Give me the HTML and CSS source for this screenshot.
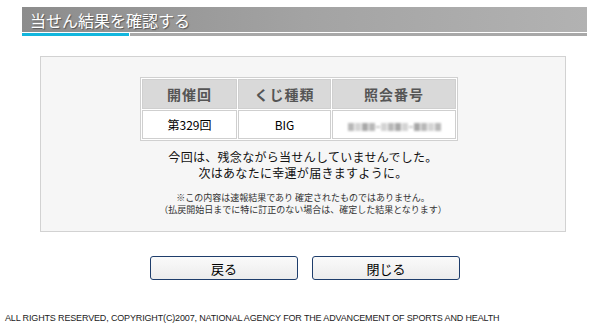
FILE: index.html
```html
<!DOCTYPE html>
<html lang="ja">
<head>
    <meta charset="UTF-8">
    <title>当せん結果を確認する</title>
    <link rel="stylesheet" href="styles.css">
</head>
<body>

    <!-- タイトル -->
    <div class="title-bar">
        <h1>当せん結果を確認する</h1>
    </div>
    <div class="title-line">
        <span class="line-accent"></span>
        <span class="line-rest"></span>
    </div>

    <!-- 結果 -->
    <div class="result-box">
        <table class="result-table">
            <tr>
                <th class="col-no">開催回</th>
                <th class="col-kind">くじ種類</th>
                <th class="col-ref">照会番号</th>
            </tr>
            <tr>
                <td>第329回</td>
                <td>BIG</td>
                <td>
                    <span class="masked">
                        <i class="b1"></i><i class="b2"></i><i class="b3"></i><i class="b1"></i>
                        <i class="sep"></i>
                        <i class="b2"></i><i class="b1"></i><i class="b3"></i><i class="b2"></i>
                        <i class="sep"></i>
                        <i class="b3"></i><i class="b1"></i><i class="b2"></i><i class="b1"></i>
                    </span>
                </td>
            </tr>
        </table>

        <p class="message">今回は、残念ながら当せんしていませんでした。<br>次はあなたに幸運が届きますように。</p>

        <p class="note">※この内容は速報結果であり 確定されたものではありません。<br>（払戻開始日までに特に訂正のない場合は、確定した結果となります）</p>
    </div>

    <!-- ボタン -->
    <div class="buttons">
        <button class="btn">戻る</button>
        <button class="btn">閉じる</button>
    </div>

    <p class="footer">ALL RIGHTS RESERVED, COPYRIGHT(C)2007, NATIONAL AGENCY FOR THE ADVANCEMENT OF SPORTS AND HEALTH</p>

</body>
</html>
```

FILE: styles.css
```css
/* ページ全体 */
body {
    margin: 0;
    width: 592px;
    height: 330px;
    background: #fff;
    color: #000;
    font-family: "Noto Sans CJK JP", "Liberation Sans", sans-serif;
}

/* タイトルバー */
.title-bar {
    margin: 7px 5px 0 22px;
    height: 25px;
    background: linear-gradient(90deg, #8c8c8c, #a3a3a3 50%, #b2b2b2);
    display: flex;
    align-items: center;
}

.title-bar h1 {
    margin: 0 0 0 8px;
    font-size: 16px;
    font-weight: normal;
    line-height: 1;
    color: #fff;
    text-shadow: 1px 1px 1px #555;
}

.title-line {
    margin: 1px 5px 0 22px;
    height: 3px;
    display: flex;
    gap: 1px;
}

.line-accent {
    width: 107px;
    background: #12b6dd;
}

.line-rest {
    flex: 1;
    background: #a8a8a8;
}

/* 結果ボックス */
.result-box {
    margin: 20px 26px 0 40px;
    height: 174px;
    border: 1px solid #d2d2d2;
    background: #f6f6f6;
    display: flex;
    flex-direction: column;
    align-items: center;
}

.result-table {
    margin: 20px 0 0 -8px;
    border-collapse: separate;
    border-spacing: 1px;
    background: #fff;
    border: 1px solid #d0d0d0;
}

.result-table th,
.result-table td {
    border: 1px solid #cfcfcf;
    text-align: center;
    padding: 0;
}

.result-table th {
    height: 28px;
    background: #d9d9d9;
    color: #555;
    font-size: 14px;
    font-weight: bold;
    letter-spacing: 1px;
}

.result-table td {
    height: 27px;
    background: #fff;
    font-size: 12px;
}

.col-no { width: 93px; }
.col-kind { width: 91px; }
.col-ref { width: 122px; }

/* 照会番号（ぼかし） */
.masked {
    display: inline-flex;
    align-items: center;
    gap: 1px;
    filter: blur(0.8px);
    vertical-align: middle;
}

.masked i {
    display: inline-block;
    width: 6px;
    height: 8px;
}

.masked .b1 { background: #b8b8b8; }
.masked .b2 { background: #d4d4d4; }
.masked .b3 { background: #a8a8a8; }

.masked .sep {
    width: 4px;
    height: 2px;
    background: #c8c8c8;
}

/* メッセージ */
.message {
    margin: 8px 0 0 0;
    font-size: 12px;
    line-height: 16px;
    letter-spacing: 0.3px;
    color: #111;
    text-align: center;
}

.note {
    margin: 11px 0 0 0;
    font-size: 9px;
    line-height: 12px;
    color: #333;
    text-align: center;
}

/* ボタン */
.buttons {
    margin: 24px 0 0 150px;
    display: flex;
    gap: 14px;
}

.btn {
    width: 148px;
    height: 24px;
    border: 1px solid #1e3d6b;
    border-radius: 3px;
    background: linear-gradient(#fafafa, #ececec);
    font-family: "Noto Sans CJK JP", sans-serif;
    font-size: 13px;
    color: #000;
    padding: 0;
    cursor: pointer;
}

/* フッター */
.footer {
    margin: 33px 0 0 5px;
    font-family: "Liberation Sans", sans-serif;
    font-size: 9px;
    letter-spacing: -0.15px;
    color: #222;
    white-space: nowrap;
}
```
